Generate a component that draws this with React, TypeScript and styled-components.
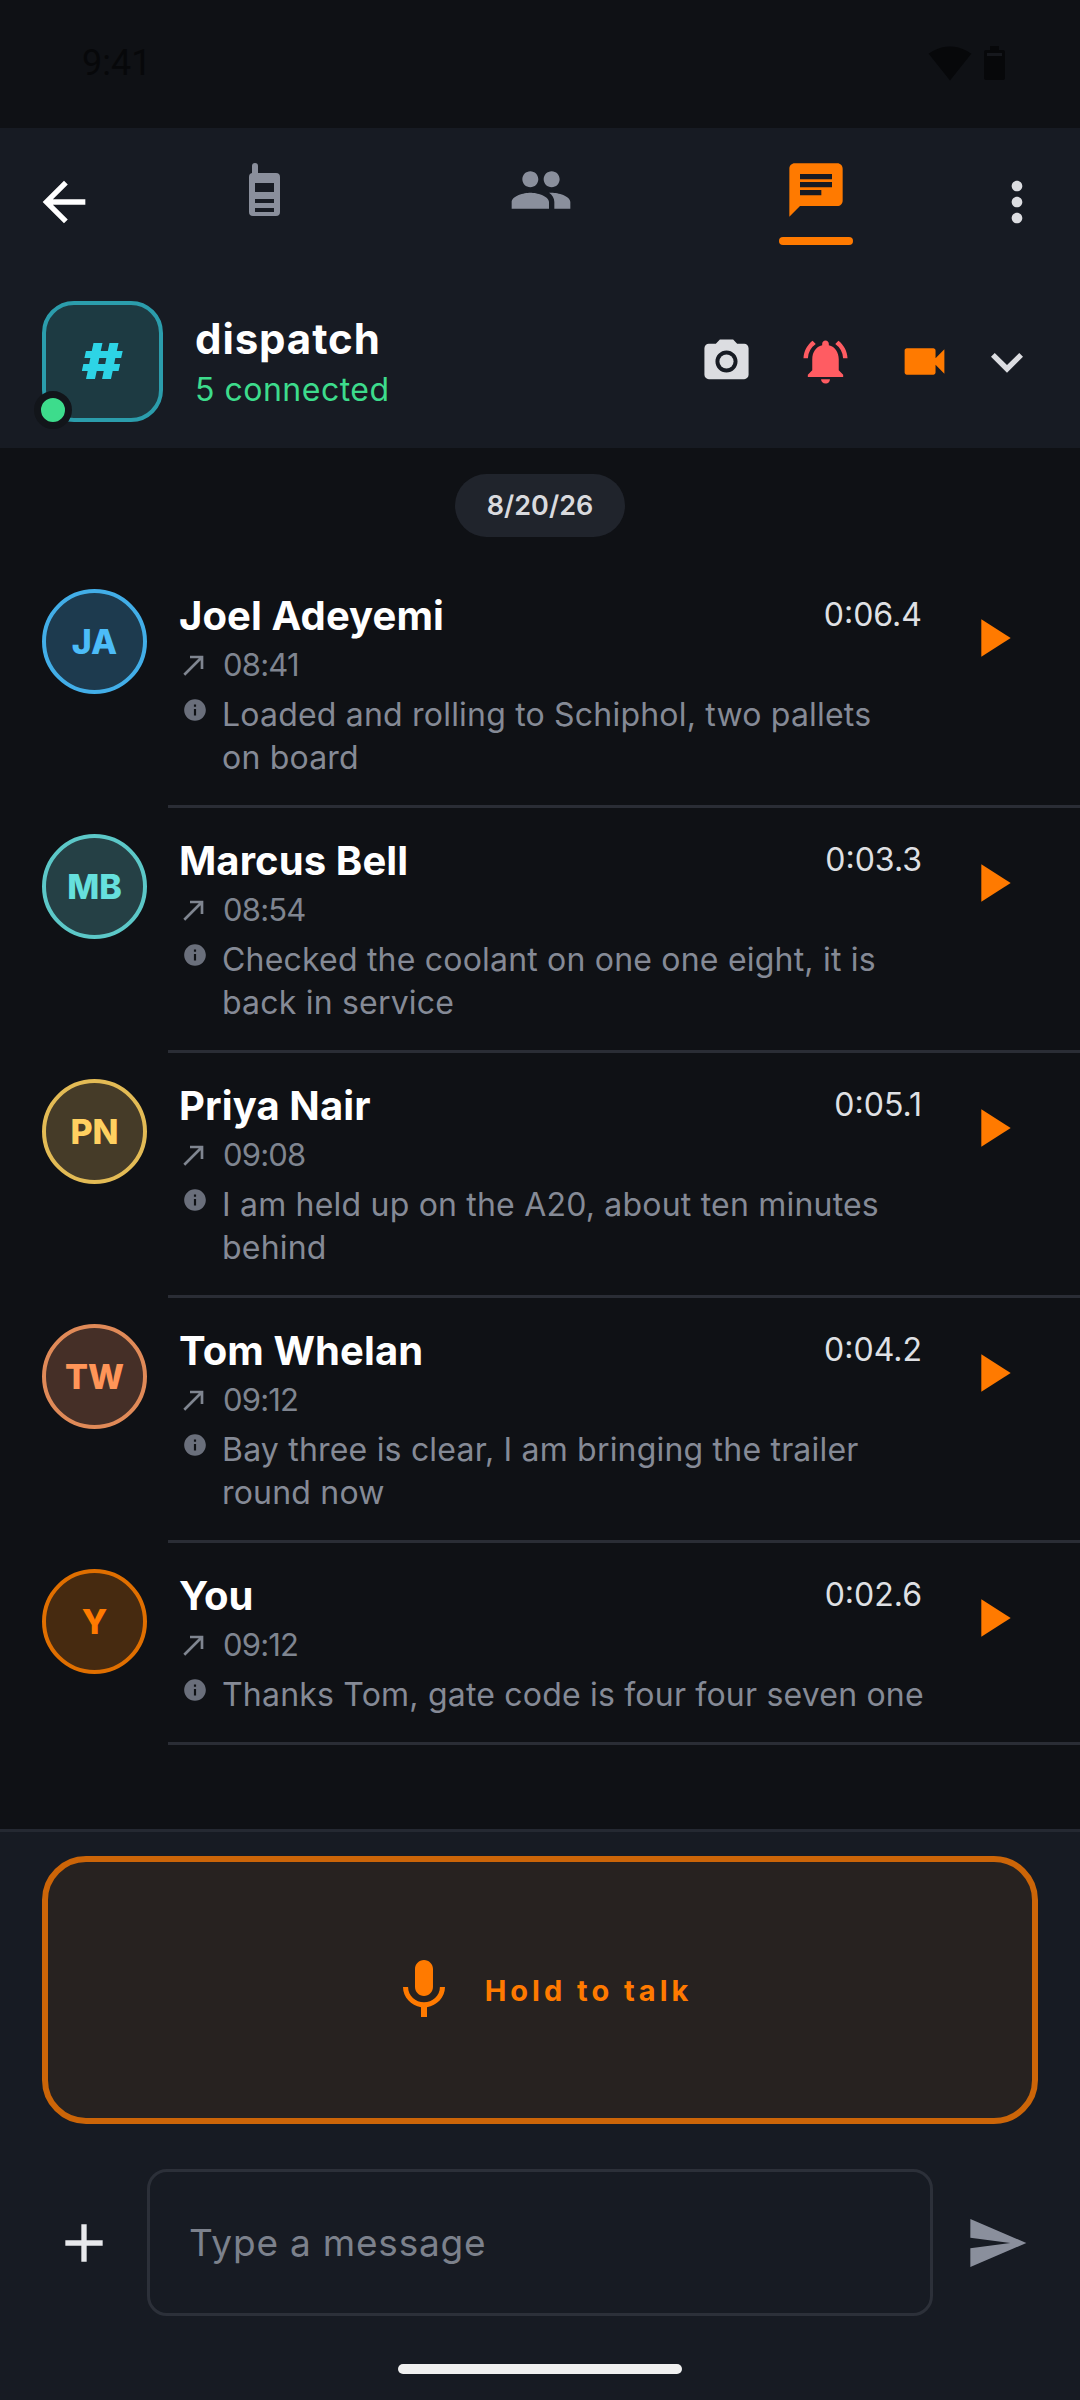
import React from 'react';
import styled, { createGlobalStyle } from 'styled-components';
import {
  MdAdd,
  MdArrowBack,
  MdCallMade,
  MdChat,
  MdExpandMore,
  MdInfo,
  MdMic,
  MdMoreVert,
  MdNotificationsActive,
  MdPeople,
  MdPhotoCamera,
  MdPlayArrow,
  MdSend,
  MdSignalWifi4Bar,
  MdVideocam,
} from 'react-icons/md';

const orange = '#ff7a00';
const fontStack = '"Inter", "Noto Sans", "Liberation Sans", sans-serif';

const GlobalStyle = createGlobalStyle`
  html, body {
    margin: 0;
    padding: 0;
    background: #0f1115;
  }
  * { box-sizing: border-box; }
`;

const Page = styled.div`
  width: 1080px;
  height: 2400px;
  display: flex;
  flex-direction: column;
  background: #0f1115;
  font-family: ${fontStack};
  overflow: hidden;
`;

const StatusBar = styled.div`
  height: 128px;
  flex-shrink: 0;
  display: flex;
  align-items: center;
  justify-content: space-between;
  padding: 0 75px 2px 82px;
  color: #07080a;
  font-family: 'Roboto', sans-serif;
  font-size: 36px;
`;

const StatusIcons = styled.div`
  display: flex;
  align-items: center;
  gap: 12px;
  svg { display: block; }
`;

const Header = styled.header`
  flex-shrink: 0;
  background: #171b23;
`;

const TabRow = styled.div`
  height: 160px;
  display: flex;
  align-items: flex-start;
`;

const SideButton = styled.div<{ $width: number; $color: string }>`
  width: ${(p) => p.$width}px;
  height: 64px;
  margin-top: 42px;
  flex-shrink: 0;
  display: flex;
  justify-content: center;
  color: ${(p) => p.$color};
  font-size: 64px;
`;

const Tab = styled.div<{ $active?: boolean }>`
  width: 275px;
  padding-top: 30px;
  display: flex;
  flex-direction: column;
  align-items: center;
  color: ${(p) => (p.$active ? orange : '#8a8f9c')};
  font-size: 64px;
  svg { display: block; }
`;

const TabGlyph = styled.div`
  height: 64px;
  display: flex;
  align-items: center;
`;

const TabMark = styled.div<{ $active?: boolean }>`
  width: 74px;
  height: 8px;
  margin-top: 15px;
  border-radius: 4px;
  background: ${(p) => (p.$active ? orange : 'transparent')};
`;

const ChannelRow = styled.div`
  height: 160px;
  padding: 13px 0 26px 42px;
  display: flex;
  align-items: center;
`;

const ChannelTile = styled.div`
  position: relative;
  width: 121px;
  height: 121px;
  flex-shrink: 0;
  display: flex;
  align-items: center;
  justify-content: center;
  border: 4px solid #2b9dac;
  border-radius: 32px;
  background: #1d3a42;
  color: #2dd4e6;
  font-size: 49px;
  font-weight: 900;
`;

const HashMark = styled.span`
  display: inline-block;
  transform: scaleX(1.28);
`;

const OnlineDot = styled.span`
  position: absolute;
  left: -12px;
  bottom: -11px;
  width: 38px;
  height: 38px;
  border: 7px solid #12151a;
  border-radius: 50%;
  background: #3ddc8c;
`;

const ChannelText = styled.div`
  align-self: flex-start;
  margin: 14px 0 0 32px;
  display: flex;
  flex-direction: column;
`;

const ChannelName = styled.div`
  color: #ffffff;
  font-size: 42px;
  font-weight: 700;
  letter-spacing: 0.9px;
  line-height: 48px;
`;

const ChannelCount = styled.div`
  color: #3ddc8c;
  font-size: 32px;
  letter-spacing: 0.5px;
  line-height: 54px;
`;

const ChannelActions = styled.div`
  margin-left: auto;
  padding-right: 41px;
  display: flex;
  align-items: center;
  gap: 46px;
  font-size: 53px;
  svg { display: block; }
`;

const Action = styled.div<{ $color: string }>`
  color: ${(p) => p.$color};
`;

const Chevron = styled.div`
  margin-left: -22px;
  color: #dcdde1;
  font-size: 64px;
`;

const DateStrip = styled.div`
  flex-shrink: 0;
  padding: 26px 0;
  display: flex;
  justify-content: center;
`;

const DatePill = styled.div`
  width: 170px;
  height: 63px;
  display: flex;
  align-items: center;
  justify-content: center;
  border-radius: 32px;
  background: #20242c;
  color: #d9dade;
  font-size: 27px;
  font-weight: 600;
`;

const MessageList = styled.main`
  flex: 1;
`;

const Row = styled.div`
  display: flex;
  padding-left: 42px;
`;

const Avatar = styled.div<{ $ring: string; $fill: string; $ink: string }>`
  width: 105px;
  height: 105px;
  margin-top: 26px;
  margin-right: 21px;
  flex-shrink: 0;
  display: flex;
  align-items: center;
  justify-content: center;
  border: 4px solid ${(p) => p.$ring};
  border-radius: 50%;
  background: ${(p) => p.$fill};
  color: ${(p) => p.$ink};
  font-size: 34px;
  font-weight: 800;
`;

const RowBody = styled.div`
  flex: 1;
  min-width: 0;
  position: relative;
  padding: 25px 158px 26px 9px;
  border-bottom: 3px solid #2a2d35;
`;

const TopLine = styled.div`
  height: 54px;
  display: flex;
  justify-content: space-between;
`;

const SenderName = styled.div`
  margin-left: 2px;
  color: #ffffff;
  font-size: 40px;
  font-weight: 700;
  letter-spacing: 0.1px;
  line-height: 56px;
`;

const Duration = styled.div`
  color: #dfe0e4;
  font-size: 32px;
  line-height: 54px;
`;

const MetaLine = styled.div`
  height: 46px;
  padding-left: 1px;
  display: flex;
  align-items: center;
  gap: 13px;
  color: #7f8590;
  font-size: 31px;
  letter-spacing: -0.8px;
  line-height: 50px;
  svg { display: block; flex-shrink: 0; }
`;

const MessageLine = styled.div`
  margin-top: 5px;
  display: flex;
  align-items: flex-start;
`;

const InfoSlot = styled.div`
  width: 45px;
  flex-shrink: 0;
  padding: 4px 0 0 5px;
  color: #6a6f7b;
  font-size: 26px;
  line-height: 0;
`;

const MessageText = styled.div`
  color: #858a96;
  font-size: 32px;
  letter-spacing: 0.2px;
  line-height: 43px;
  white-space: pre;
`;

const PlayButton = styled.div`
  position: absolute;
  top: 43px;
  right: 56px;
  color: ${orange};
  font-size: 64px;
  line-height: 0;
`;

const Footer = styled.footer`
  flex-shrink: 0;
  padding-top: 24px;
  border-top: 3px solid #252932;
  background: #171b23;
`;

const TalkButton = styled.div`
  height: 268px;
  margin: 0 42px;
  display: flex;
  align-items: center;
  justify-content: center;
  gap: 25px;
  border: 6px solid #cc6508;
  border-radius: 44px;
  background: #272220;
  color: ${orange};
  font-size: 72px;
  svg { display: block; }
`;

const TalkLabel = styled.span`
  font-size: 29px;
  font-weight: 700;
  letter-spacing: 4px;
`;

const ComposeRow = styled.div`
  margin-top: 45px;
  padding-left: 52px;
  display: flex;
  align-items: center;
  font-size: 64px;
  svg { display: block; }
`;

const AddButton = styled.div`
  margin-right: 31px;
  color: #e8e9ec;
`;

const InputBox = styled.div`
  width: 786px;
  height: 147px;
  padding-left: 39px;
  display: flex;
  align-items: center;
  border: 3px solid #2c3039;
  border-radius: 20px;
  color: #7c818c;
  font-size: 37px;
  letter-spacing: 0.8px;
`;

const SendButton = styled.div`
  margin-left: 32px;
  color: #8a8f9c;
`;

const HomeBar = styled.div`
  width: 284px;
  height: 10px;
  margin: 48px auto 26px;
  border-radius: 5px;
  background: #f0f0f0;
`;

const RadioSvg = styled.svg`
  margin-right: 2px;
`;

const RadioIcon = () => (
  <RadioSvg width="32" height="54" viewBox="0 0 32 54" fill="currentColor">
    <path
      fillRule="evenodd"
      d="M3 3a3 3 0 0 1 6 0v7h18a4 4 0 0 1 4 4v35a4 4 0 0 1-4 4H4a4 4 0 0 1-4-4V14a4 4 0 0 1 3-3.9zM6 20v9h19v-9zM6 36v4h19v-4zM6 45v4h19v-4z"
    />
  </RadioSvg>
);

const BatteryIcon = () => (
  <svg width="21" height="34" viewBox="0 0 21 34" fill="currentColor">
    <path d="M6 0h9v4h4a2 2 0 0 1 2 2v26a2 2 0 0 1-2 2H2a2 2 0 0 1-2-2V6a2 2 0 0 1 2-2h4z" />
    <rect x="3" y="7" width="15" height="3" fill="#16181d" />
  </svg>
);

type Message = {
  name: string;
  initials: string;
  ring: string;
  fill: string;
  ink: string;
  duration: string;
  time: string;
  text: string;
};

const messages: Message[] = [
  {
    name: 'Joel Adeyemi',
    initials: 'JA',
    ring: '#42aee8',
    fill: '#1d3a4e',
    ink: '#4cbcf8',
    duration: '0:06.4',
    time: '08:41',
    text: 'Loaded and rolling to Schiphol, two pallets\non board',
  },
  {
    name: 'Marcus Bell',
    initials: 'MB',
    ring: '#5cc8c8',
    fill: '#254045',
    ink: '#66e0dd',
    duration: '0:03.3',
    time: '08:54',
    text: 'Checked the coolant on one one eight, it is\nback in service',
  },
  {
    name: 'Priya Nair',
    initials: 'PN',
    ring: '#e3bb55',
    fill: '#453b28',
    ink: '#ffd060',
    duration: '0:05.1',
    time: '09:08',
    text: 'I am held up on the A20, about ten minutes\nbehind',
  },
  {
    name: 'Tom Whelan',
    initials: 'TW',
    ring: '#e08a58',
    fill: '#452f27',
    ink: '#ff9558',
    duration: '0:04.2',
    time: '09:12',
    text: 'Bay three is clear, I am bringing the trailer\nround now',
  },
  {
    name: 'You',
    initials: 'Y',
    ring: '#e06f00',
    fill: '#462a10',
    ink: '#ff7a00',
    duration: '0:02.6',
    time: '09:12',
    text: 'Thanks Tom, gate code is four four seven one',
  },
];

export default function App() {
  return (
    <Page>
      <GlobalStyle />
      <StatusBar>
        <span>9:41</span>
        <StatusIcons>
          <MdSignalWifi4Bar size={44} />
          <BatteryIcon />
        </StatusIcons>
      </StatusBar>

      <Header>
        <TabRow>
          <SideButton $width={128} $color="#ffffff">
            <MdArrowBack />
          </SideButton>
          <Tab>
            <TabGlyph>
              <RadioIcon />
            </TabGlyph>
            <TabMark />
          </Tab>
          <Tab>
            <TabGlyph>
              <MdPeople />
            </TabGlyph>
            <TabMark />
          </Tab>
          <Tab $active>
            <TabGlyph>
              <MdChat />
            </TabGlyph>
            <TabMark $active />
          </Tab>
          <SideButton $width={127} $color="#dcdde1">
            <MdMoreVert />
          </SideButton>
        </TabRow>

        <ChannelRow>
          <ChannelTile>
            <HashMark>#</HashMark>
            <OnlineDot />
          </ChannelTile>
          <ChannelText>
            <ChannelName>dispatch</ChannelName>
            <ChannelCount>5 connected</ChannelCount>
          </ChannelText>
          <ChannelActions>
            <Action $color="#dcdde1">
              <MdPhotoCamera />
            </Action>
            <Action $color="#ff5c62">
              <MdNotificationsActive />
            </Action>
            <Action $color={orange}>
              <MdVideocam />
            </Action>
            <Chevron>
              <MdExpandMore />
            </Chevron>
          </ChannelActions>
        </ChannelRow>
      </Header>

      <DateStrip>
        <DatePill>8/20/26</DatePill>
      </DateStrip>

      <MessageList>
        {messages.map((m) => (
          <Row key={m.name}>
            <Avatar $ring={m.ring} $fill={m.fill} $ink={m.ink}>
              {m.initials}
            </Avatar>
            <RowBody>
              <TopLine>
                <SenderName>{m.name}</SenderName>
                <Duration>{m.duration}</Duration>
              </TopLine>
              <MetaLine>
                <MdCallMade size={32} />
                <span>{m.time}</span>
              </MetaLine>
              <MessageLine>
                <InfoSlot>
                  <MdInfo />
                </InfoSlot>
                <MessageText>{m.text}</MessageText>
              </MessageLine>
              <PlayButton>
                <MdPlayArrow />
              </PlayButton>
            </RowBody>
          </Row>
        ))}
      </MessageList>

      <Footer>
        <TalkButton>
          <MdMic />
          <TalkLabel>Hold to talk</TalkLabel>
        </TalkButton>
        <ComposeRow>
          <AddButton>
            <MdAdd />
          </AddButton>
          <InputBox>Type a message</InputBox>
          <SendButton>
            <MdSend />
          </SendButton>
        </ComposeRow>
        <HomeBar />
      </Footer>
    </Page>
  );
}
